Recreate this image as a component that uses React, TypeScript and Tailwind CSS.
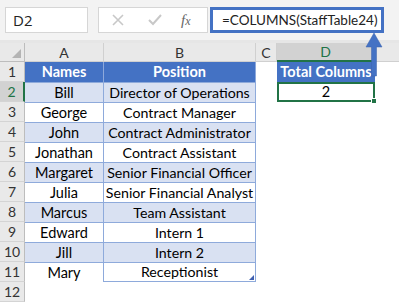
import React from "react";

const rows: [string, string][] = [
  ["Bill", "Director of Operations"],
  ["George", "Contract Manager"],
  ["John", "Contract Administrator"],
  ["Jonathan", "Contract Assistant"],
  ["Margaret", "Senior Financial Officer"],
  ["Julia", "Senior Financial Analyst"],
  ["Marcus", "Team Assistant"],
  ["Edward", "Intern 1"],
  ["Jill", "Intern 2"],
  ["Mary", "Receptionist"],
];

const cellFont = { fontFamily: "Lato, 'Noto Sans', sans-serif" };

function RowHead({ n, selected }: { n: number; selected?: boolean }) {
  return (
    <div
      className={
        "h-[20px] flex items-center justify-center text-[14px] border-b border-[#d4d4d4] " +
        (selected
          ? "bg-[#d2d2d2] text-[#217346] border-r-2 border-r-[#217346]"
          : "bg-[#e9e9e9] text-[#333] border-r border-r-[#bdbdbd]")
      }
      style={cellFont}
    >
      {n}
    </div>
  );
}

export default function App() {
  return (
    <div className="w-[399px] h-[303px] bg-white overflow-hidden relative select-none" style={cellFont}>
      {/* Formula bar */}
      <div className="h-[40px] bg-[#f3f3f3] flex items-start pt-[7px] pl-[5px]">
        <div className="w-[83px] h-[26px] bg-white border border-[#d6d6d6] flex items-center pl-[7px] text-[15px] text-[#222]" style={{ fontFamily: "'Open Sans', sans-serif" }}>
          D2
        </div>
        <div className="ml-[10px] w-[110px] h-[26px] bg-white border border-[#d6d6d6] flex items-center">
          <svg width="14" height="14" viewBox="0 0 14 14" className="ml-[12px]">
            <path d="M2 2 L12 12 M12 2 L2 12" stroke="#c8c8c8" strokeWidth="1.6" />
          </svg>
          <svg width="16" height="14" viewBox="0 0 16 14" className="ml-[22px]">
            <path d="M2 7 L6 11 L14 2" stroke="#c8c8c8" strokeWidth="2" fill="none" />
          </svg>
          <span className="ml-[18px] text-[15px] italic text-[#666]" style={{ fontFamily: "'Liberation Serif', serif" }}>
            f<span className="text-[12px]">x</span>
          </span>
        </div>
        <div className="ml-[2px] w-[174px] h-[26px] bg-white border-[3px] border-[#4472c4] flex items-center pl-[9px] text-[13.5px] text-[#222] whitespace-nowrap overflow-hidden" style={{ fontFamily: "Lato, sans-serif" }}>
          =COLUMNS(StaffTable24)
        </div>
      </div>
      <div className="h-[3px] bg-[#e6e6e6]" />

      {/* Grid */}
      <div className="grid grid-cols-[25px_79px_152px_21px_98px_24px]">
        {/* column headers */}
        <div className="h-[19px] bg-[#e9e9e9] border-r border-b border-[#bdbdbd] relative">
          <svg width="9" height="9" viewBox="0 0 9 9" className="absolute right-[3px] bottom-[3px]">
            <path d="M9 0 L9 9 L0 9 Z" fill="#b4b4b4" />
          </svg>
        </div>
        {["A", "B", "C"].map((c) => (
          <div key={c} className="h-[19px] bg-[#e9e9e9] border-r border-b border-[#d0d0d0] flex items-center justify-center text-[14px] text-[#333]" style={cellFont}>
            {c}
          </div>
        ))}
        <div className="h-[19px] bg-[#d2d2d2] border-r border-[#d0d0d0] border-b-2 border-b-[#217346] flex items-center justify-center text-[14px] text-[#217346]">
          D
        </div>
        <div className="h-[19px] bg-[#e9e9e9] border-b border-[#d0d0d0]" />

        {/* row 1 */}
        <RowHead n={1} />
        <div className="h-[20px] bg-[#4472c4] text-white font-bold text-[14.5px] flex items-center justify-center border-r border-[#8ea9db]">Names</div>
        <div className="h-[20px] bg-[#4472c4] text-white font-bold text-[14.5px] flex items-center justify-center border-r border-[#8ea9db]">Position</div>
        <div className="h-[20px]" />
        <div className="h-[20px] bg-[#4472c4] text-white font-bold text-[14.5px] flex items-center justify-center">Total Columns</div>
        <div className="h-[20px]" />

        {rows.map(([name, pos], i) => {
          const n = i + 2;
          const band = i % 2 === 0 ? "bg-[#d9e1f2]" : "bg-white";
          return (
            <React.Fragment key={n}>
              <RowHead n={n} selected={n === 2} />
              <div className={`h-[20px] ${band} text-[14.5px] text-black flex items-center justify-center border-t border-r border-[#8eaadb]`}>{name}</div>
              <div className={`h-[20px] ${band} text-[14.2px] text-black flex items-center justify-center border-t border-r border-[#8eaadb] ${n === 11 ? "border-b relative" : ""}`}>
                {pos}
                {n === 11 && (
                  <svg width="5" height="5" viewBox="0 0 5 5" className="absolute right-[1px] bottom-[1px]">
                    <path d="M5 0 L5 5 L0 5 Z" fill="#3f5fb0" />
                  </svg>
                )}
              </div>
              <div className="h-[20px]" />
              {n === 2 ? (
                <div className="h-[20px] border-2 border-[#217346] text-[14.5px] text-black flex items-center justify-center relative">
                  2
                  <div className="absolute right-[-4px] bottom-[-4px] w-[6px] h-[6px] bg-[#217346] border border-white" />
                </div>
              ) : (
                <div className="h-[20px]" />
              )}
              <div className="h-[20px]" />
            </React.Fragment>
          );
        })}
        <RowHead n={12} />
        <div className="col-span-5 h-[20px]" />
      </div>

      {/* annotation arrow */}
      <svg width="20" height="56" viewBox="0 0 20 56" className="absolute left-[364px] top-[32px]">
        <path d="M10 1 L18 15 L12.5 15 L12.5 44 L7.5 44 L7.5 15 L2 15 Z" fill="#4472c4" stroke="#3a62ad" strokeWidth="0.5" />
      </svg>
    </div>
  );
}
